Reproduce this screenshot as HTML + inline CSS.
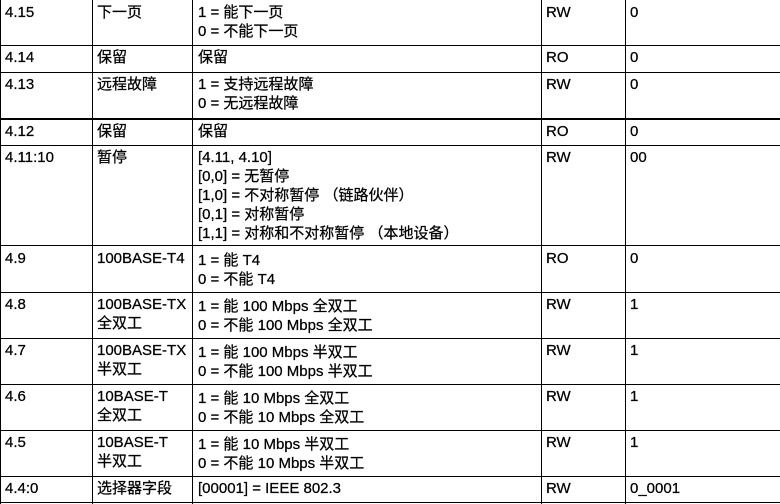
<!DOCTYPE html>
<html><head><meta charset="utf-8"><style>
html,body{margin:0;padding:0;background:#fff;}
body{width:780px;height:504px;position:relative;overflow:hidden;font-family:"Liberation Sans","Noto Sans CJK SC",sans-serif;font-size:15px;color:#000;-webkit-text-stroke:0.25px #000;}
.h{position:absolute;left:0;width:780px;height:1px;background:#000;}
.v{position:absolute;top:0;width:1px;height:504px;background:#000;}
.t{position:absolute;line-height:19px;white-space:nowrap;}
</style></head><body>
<div class="v" style="left:0"></div>
<div class="v" style="left:92px"></div>
<div class="v" style="left:192px"></div>
<div class="v" style="left:541px"></div>
<div class="v" style="left:625px"></div>
<div class="h" style="top:45px"></div>
<div class="h" style="top:72px"></div>
<div class="h" style="top:118px;height:2px"></div>
<div class="h" style="top:145px"></div>
<div class="h" style="top:245px"></div>
<div class="h" style="top:292px"></div>
<div class="h" style="top:338px"></div>
<div class="h" style="top:384px"></div>
<div class="h" style="top:430px"></div>
<div class="h" style="top:476px"></div>
<div class="h" style="top:502px"></div>

<div class="t" style="left:5px;top:3px">4.15</div>
<div class="t" style="left:97px;top:3px">下一页</div>
<div class="t" style="left:198px;top:3px">1 = 能下一页<br>0 = 不能下一页</div>
<div class="t" style="left:546px;top:3px">RW</div>
<div class="t" style="left:630px;top:3px">0</div>

<div class="t" style="left:5px;top:48px">4.14</div>
<div class="t" style="left:97px;top:48px">保留</div>
<div class="t" style="left:198px;top:48px">保留</div>
<div class="t" style="left:546px;top:48px">RO</div>
<div class="t" style="left:630px;top:48px">0</div>

<div class="t" style="left:5px;top:75px">4.13</div>
<div class="t" style="left:97px;top:75px">远程故障</div>
<div class="t" style="left:198px;top:75px">1 = 支持远程故障<br>0 = 无远程故障</div>
<div class="t" style="left:546px;top:75px">RW</div>
<div class="t" style="left:630px;top:75px">0</div>

<div class="t" style="left:5px;top:122px">4.12</div>
<div class="t" style="left:97px;top:122px">保留</div>
<div class="t" style="left:198px;top:122px">保留</div>
<div class="t" style="left:546px;top:122px">RO</div>
<div class="t" style="left:630px;top:122px">0</div>

<div class="t" style="left:5px;top:148px">4.11:10</div>
<div class="t" style="left:97px;top:148px">暂停</div>
<div class="t" style="left:198px;top:148px">[4.11, 4.10]<br>[0,0] = 无暂停<br>[1,0] = 不对称暂停 （链路伙伴）<br>[0,1] = 对称暂停<br>[1,1] = 对称和不对称暂停 （本地设备）</div>
<div class="t" style="left:546px;top:148px">RW</div>
<div class="t" style="left:630px;top:148px">00</div>

<div class="t" style="left:5px;top:249px">4.9</div>
<div class="t" style="left:97px;top:249px">100BASE-T4</div>
<div class="t" style="left:198px;top:251px">1 = 能 T4<br>0 = 不能 T4</div>
<div class="t" style="left:546px;top:249px">RO</div>
<div class="t" style="left:630px;top:249px">0</div>

<div class="t" style="left:5px;top:295px">4.8</div>
<div class="t" style="left:97px;top:295px">100BASE-TX<br>全双工</div>
<div class="t" style="left:198px;top:297px">1 = 能 100 Mbps 全双工<br>0 = 不能 100 Mbps 全双工</div>
<div class="t" style="left:546px;top:295px">RW</div>
<div class="t" style="left:630px;top:295px">1</div>

<div class="t" style="left:5px;top:341px">4.7</div>
<div class="t" style="left:97px;top:341px">100BASE-TX<br>半双工</div>
<div class="t" style="left:198px;top:343px">1 = 能 100 Mbps 半双工<br>0 = 不能 100 Mbps 半双工</div>
<div class="t" style="left:546px;top:341px">RW</div>
<div class="t" style="left:630px;top:341px">1</div>

<div class="t" style="left:5px;top:387px">4.6</div>
<div class="t" style="left:97px;top:387px">10BASE-T<br>全双工</div>
<div class="t" style="left:198px;top:389px">1 = 能 10 Mbps 全双工<br>0 = 不能 10 Mbps 全双工</div>
<div class="t" style="left:546px;top:387px">RW</div>
<div class="t" style="left:630px;top:387px">1</div>

<div class="t" style="left:5px;top:433px">4.5</div>
<div class="t" style="left:97px;top:433px">10BASE-T<br>半双工</div>
<div class="t" style="left:198px;top:435px">1 = 能 10 Mbps 半双工<br>0 = 不能 10 Mbps 半双工</div>
<div class="t" style="left:546px;top:433px">RW</div>
<div class="t" style="left:630px;top:433px">1</div>

<div class="t" style="left:5px;top:479px">4.4:0</div>
<div class="t" style="left:97px;top:479px">选择器字段</div>
<div class="t" style="left:198px;top:479px">[00001] = IEEE 802.3</div>
<div class="t" style="left:546px;top:479px">RW</div>
<div class="t" style="left:630px;top:479px">0_0001</div>
</body></html>
